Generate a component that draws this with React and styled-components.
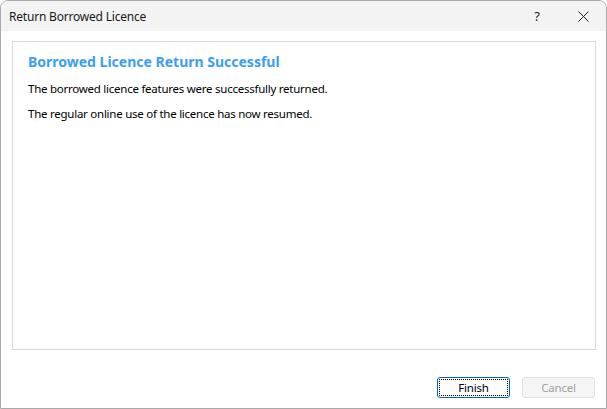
import React from 'react';
import styled, { createGlobalStyle } from 'styled-components';

const GlobalStyle = createGlobalStyle`
  html, body {
    margin: 0;
    padding: 0;
    background: #ffffff;
  }
  body {
    font-family: 'Noto Sans', 'Open Sans', sans-serif;
    font-size: 12px;
    color: #000;
  }
`;

const Window = styled.div`
  box-sizing: border-box;
  width: 607px;
  height: 409px;
  border: 1px solid #a9a9a9;
  border-radius: 8px 8px 0 0;
  background: #ffffff;
  display: flex;
  flex-direction: column;
  overflow: hidden;
`;

const TitleBar = styled.div`
  height: 30px;
  flex: none;
  background: #f3f3f3;
  display: flex;
  align-items: center;
  padding-left: 8px;
`;

const Title = styled.div`
  flex: 1;
  font-size: 12px;
  color: #1a1a1a;
  letter-spacing: -0.2px;
`;

const CaptionButton = styled.div`
  width: 46px;
  height: 30px;
  display: flex;
  align-items: center;
  justify-content: center;
  font-size: 13px;
  color: #1a1a1a;
`;

const Body = styled.div`
  flex: 1;
  display: flex;
  flex-direction: column;
  padding: 10px 10px 10px 11px;
`;

const Panel = styled.div`
  height: 309px;
  box-sizing: border-box;
  border: 1px solid #d9d9d9;
  padding: 10px 15px;
`;

const Heading = styled.h1`
  margin: 0 0 7px;
  font-size: 14px;
  font-weight: 700;
  color: #3a9ef5;
  line-height: 20px;
`;

const Para = styled.p`
  margin: 0 0 6px;
  font-size: 11.5px;
  line-height: 19px;
  letter-spacing: -0.25px;
`;

const Footer = styled.div`
  margin-top: auto;
  display: flex;
  justify-content: flex-end;
  gap: 12px;
  padding-right: 1px;
`;

const Button = styled.button`
  box-sizing: border-box;
  width: 73px;
  height: 21px;
  padding: 0;
  font-family: inherit;
  font-size: 11.5px;
  letter-spacing: -0.2px;
  border-radius: 3px;
  background: ${(p) => (p.disabled ? '#f5f5f5' : '#fdfdfd')};
  color: ${(p) => (p.disabled ? '#a0a0a0' : '#000')};
  border: 1px solid ${(p) => (p.primary ? '#0067c0' : '#e0e0e0')};
  outline: ${(p) => (p.primary ? '1px dotted #000' : 'none')};
  outline-offset: -3px;
`;

function CloseIcon() {
  return (
    <svg width="11" height="11" viewBox="0 0 11 11">
      <path d="M0.5 0.5 L10.5 10.5 M10.5 0.5 L0.5 10.5" stroke="#1a1a1a" strokeWidth="1" />
    </svg>
  );
}

export default function App() {
  return (
    <>
      <GlobalStyle />
      <Window>
        <TitleBar>
          <Title>Return Borrowed Licence</Title>
          <CaptionButton>?</CaptionButton>
          <CaptionButton>
            <CloseIcon />
          </CaptionButton>
        </TitleBar>
        <Body>
          <Panel>
            <Heading>Borrowed Licence Return Successful</Heading>
            <Para>The borrowed licence features were successfully returned.</Para>
            <Para>The regular online use of the licence has now resumed.</Para>
          </Panel>
          <Footer>
            <Button primary>Finish</Button>
            <Button disabled>Cancel</Button>
          </Footer>
        </Body>
      </Window>
    </>
  );
}
